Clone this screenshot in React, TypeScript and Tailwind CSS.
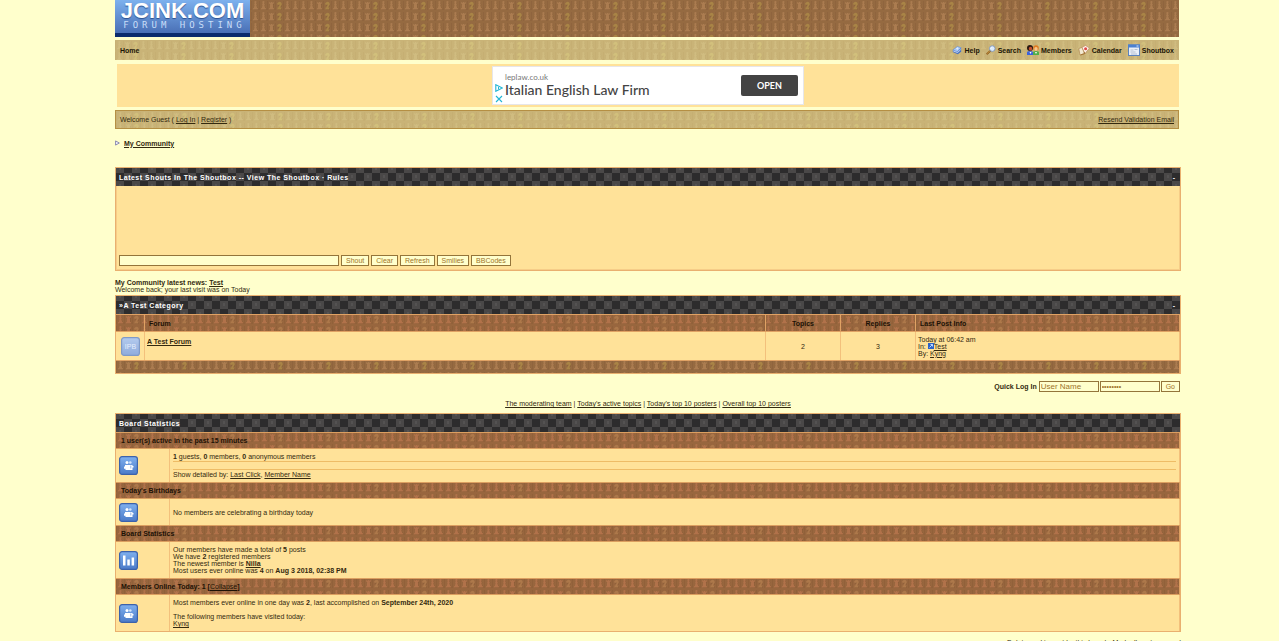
import React from "react";

type Tone = "wood" | "red" | "tan" | "check";

const PIECE = {
  pawn: "M-1-3.2a1.2 1.2 0 1 1 2 0l-.4 1h.8v1h-.6L1.600 2H2.400V3.500H-2.400V2H-1.600L-.8-1.200H-1.400v-1h.8z",
  rook: "M-2.200-4h1.200v1h.5v-1h1v1h.5v-1h1.200v2h-.8l.2 4h.8v1.500h-4.800V2h.8l.2-4h-.8z",
  knight: "M-2.400-2.500Q-.5-5 1.500-3.700Q3.400-2 1.200.5L.8 1.500H1.800V3.500H-2V1.500H-1Q-1 0 .6-1.300L-1-1.200L-1.800-.8z",
};

function ChessPattern({ id, bg, piece, shade, gold }: { id: string; bg: string; piece: string; shade: string; gold: string }) {
  const row: (keyof typeof PIECE)[] = ["pawn", "rook", "knight", "pawn", "pawn", "pawn"];
  return (
    <pattern id={id} width="48" height="11" patternUnits="userSpaceOnUse">
      <rect width="48" height="11" fill={bg} />
      {row.map((name, i) => (
        <g key={i}>
          <path d={PIECE[name]} fill={shade} transform={`translate(${i * 8 + 5} 6.500)`} />
          <path d={PIECE[name]} fill={name === "knight" ? gold : piece} transform={`translate(${i * 8 + 4.500} 6)`} />
          <rect x={i * 8} y="1" width="1" height="9" fill={shade} opacity=".45" />
        </g>
      ))}
    </pattern>
  );
}

function PatternDefs() {
  return (
    <svg className="absolute h-0 w-0" aria-hidden="true">
      <defs>
        <ChessPattern id="tex-wood" bg="#956a41" piece="#ab7c50" shade="#875e39" gold="#a98446" />
        <ChessPattern id="tex-red" bg="#98663e" piece="#b1724a" shade="#8a5b35" gold="#ad784a" />
        <ChessPattern id="tex-tan" bg="#c9b377" piece="#d0bc80" shade="#c3ac70" gold="#d2c07c" />
        <pattern id="tex-check" width="16" height="16" patternUnits="userSpaceOnUse">
          <rect width="16" height="16" fill="#4a4848" />
          <rect x="8" y="-3" width="8" height="8" fill="#2d2c2d" />
          <rect x="0" y="5" width="8" height="8" fill="#2d2c2d" />
          <rect x="8" y="13" width="8" height="8" fill="#2d2c2d" />
          <rect x="11" y="7" width="2" height="3" fill="#545252" />
          <rect x="3" y="0" width="2" height="2" fill="#545252" />
        </pattern>
      </defs>
    </svg>
  );
}

function Texture({ tone }: { tone: Tone }) {
  return (
    <svg className="absolute inset-0 -z-10 h-full w-full" aria-hidden="true">
      <rect width="100%" height="100%" fill={`url(#tex-${tone})`} />
    </svg>
  );
}

function Link({ children, bold }: { children: React.ReactNode; bold?: boolean }) {
  return (
    <a href="#" className={bold ? "font-bold underline" : "underline"}>
      {children}
    </a>
  );
}

function TitleBar({ title, collapsible }: { title: string; collapsible?: boolean }) {
  return (
    <div className="relative isolate flex h-[18px] items-center justify-between px-[3px] text-white">
      <Texture tone="check" />
      <h2 className="font-bold tracking-[0.07em]">{title}</h2>
      {collapsible && (
        <button type="button" aria-label={`Collapse ${title}`} className="px-0.5 font-bold">
          -
        </button>
      )}
    </div>
  );
}

function HelpIcon() {
  return (
    <svg viewBox="0 0 12 12" className="size-2.5" aria-hidden="true">
      <path d="M1 6.500 6.500 2 11 3.500V8L7 11 1 8.500z" fill="#4471c4" />
      <path d="M1 6 6.500 1.700 11 3.300 6.500 8z" fill="#a9c9f5" stroke="#5d89d6" strokeWidth=".6" />
      <path d="M1.500 7.200 6.700 9 10.500 5.500" fill="none" stroke="#fff" strokeWidth=".8" />
      <path d="M5 4.300q1.500-1.300 2.200-.4t-1.400 1.300" fill="none" stroke="#fff" strokeWidth=".9" />
    </svg>
  );
}

function SearchIcon() {
  return (
    <svg viewBox="0 0 12 12" className="size-2.5" aria-hidden="true">
      <path d="M5 7 1.600 10.400" stroke="#8a5a1c" strokeWidth="2.400" strokeLinecap="round" />
      <path d="M4.600 7 1.700 9.900" stroke="#e2ae55" strokeWidth=".9" strokeLinecap="round" />
      <circle cx="7.500" cy="4.300" r="3.400" fill="#dcebfb" stroke="#7f96b8" strokeWidth="1.100" />
      <path d="M5.700 4.200Q6.200 3 7.500 2.900" stroke="#fff" strokeWidth=".9" fill="none" />
    </svg>
  );
}

function MembersIcon() {
  return (
    <svg viewBox="0 0 12 12" className="size-3" aria-hidden="true">
      <path d="M0 11V8.500Q0 7 3 7T6 8.500V11z" fill="#3a62dc" />
      <path d="M6 11V8.500Q6 7 9 7T12 8.500V11z" fill="#4fae4a" />
      <circle cx="3" cy="4" r="3" fill="#2a1812" />
      <ellipse cx="3.500" cy="4.800" rx="1.700" ry="2" fill="#c4532f" />
      <circle cx="9" cy="4" r="2.800" fill="#e07b22" />
      <ellipse cx="9" cy="5" rx="1.700" ry="2" fill="#f7c78b" />
      <path d="M2.500 8 3.500 10 4.500 8zM8 8 9 10 10 8z" fill="#fff" />
    </svg>
  );
}

function CalendarIcon() {
  return (
    <svg viewBox="0 0 12 12" className="size-3" aria-hidden="true">
      <path d="M.8 4.500 4 3.500 6.500 9.500 2 11z" fill="#f3ead2" stroke="#b08a50" strokeWidth=".7" />
      <path d="M4 3.500 7.500 1.500 11.500 4 7 9.500z" fill="#fff6ee" stroke="#bb8b62" strokeWidth=".7" />
      <circle cx="7.600" cy="4.800" r="1.500" fill="#e04a48" />
      <path d="M2.500 11 7 9.500 6 8" fill="none" stroke="#a57436" strokeWidth="1" />
    </svg>
  );
}

function ShoutboxIcon() {
  return (
    <svg viewBox="0 0 12 12" className="size-3" aria-hidden="true">
      <rect x=".5" y="1" width="11" height="10.500" fill="#e9eff8" stroke="#5b83bd" />
      <rect x="0" y=".5" width="12" height="3" fill="#4b80d0" />
      <path d="M8.500 2h2" stroke="#dbe9ff" strokeWidth="1" />
      <path d="M2.500 6h3M6.500 5.500h3M2.500 8h5M3 10h6" stroke="#a7b4c6" strokeWidth=".8" />
    </svg>
  );
}

function Tile({ kind }: { kind: "people" | "bars" | "forum" }) {
  const faded = kind === "forum";
  return (
    <svg viewBox="0 0 19 19" className="h-[19px] w-[19px]" aria-hidden="true">
      <defs>
        <linearGradient id={`tile-${kind}`} x2="0" y2="1">
          <stop offset="0" stopColor={faded ? "#b4cbee" : "#7fb0ee"} />
          <stop offset="1" stopColor={faded ? "#8fabdc" : "#4c7bc8"} />
        </linearGradient>
      </defs>
      <rect x=".6" y=".6" width="17.800" height="17.800" rx="2.500" fill={`url(#tile-${kind})`} stroke={faded ? "#7f9ac8" : "#3c62ab"} strokeWidth="1.200" />
      {kind === "people" && (
        <g fill="#fff">
          <circle cx="8" cy="6.500" r="1.500" />
          <circle cx="11.300" cy="6.500" r="1.300" fill="#d4e4fb" />
          <path d="M6 9h7.500v1h1v1.500h-1V14H6.500V12.800H5V10.500H6z" />
          <path d="M11.800 9.500v3" stroke="#6b98de" strokeWidth=".7" />
        </g>
      )}
      {kind === "bars" && <path d="M4 4.500h2.500v10H4zM8.300 8.500h2.500v6H8.300zM12.600 6.500h2.500v8h-2.500z" fill="#fff" />}
      {faded && (
        <text x="9.500" y="12" textAnchor="middle" fontSize="7" fill="#e6eefc" fontFamily="Liberation Sans, sans-serif">
          IPB
        </text>
      )}
    </svg>
  );
}

const NAV = [
  { label: "Help", Icon: HelpIcon },
  { label: "Search", Icon: SearchIcon },
  { label: "Members", Icon: MembersIcon },
  { label: "Calendar", Icon: CalendarIcon },
  { label: "Shoutbox", Icon: ShoutboxIcon },
];

const FIELD = "h-[11px] border border-[#94753a] bg-[#ffffcc] text-[#a0742a] placeholder:text-[#a0742a] outline-none";

function SmallButton({ children }: { children: string }) {
  return (
    <button type="button" className="flex h-[11px] items-center border border-[#94753a] bg-[#ffffcc] px-1 text-[#a0742a]">
      {children}
    </button>
  );
}

function Header() {
  return (
    <header className="mr-0.5">
      <div className="relative isolate flex h-[37px]">
        <Texture tone="wood" />
        <a
          href="#"
          className="flex w-[135px] flex-col items-center border-b-4 border-[#0b2c6d] bg-linear-to-b from-[#7db1ee] to-[#4a70b6] text-white"
        >
          <span className="text-[22px] leading-[21px] font-bold [text-shadow:0_1px_1px_#2d508f]">JCINK.COM</span>
          <span className="pl-1 font-['DejaVu_Sans_Mono',monospace] text-[9px] leading-[9px] tracking-[4px] text-[#c9def8]">FORUM HOSTING</span>
        </a>
      </div>
      <nav className="relative isolate mt-[3px] flex h-5 items-center justify-between px-[5px] font-bold text-[#1d1706]">
        <Texture tone="tan" />
        <a href="#">Home</a>
        <ul className="flex items-center gap-1.5">
          {NAV.map(({ label, Icon }) => (
            <li key={label}>
              <a href="#" className="flex items-center gap-0.5">
                <Icon />
                {label}
              </a>
            </li>
          ))}
        </ul>
      </nav>
      <div className="mt-1 ml-0.5 flex h-[43px] items-center justify-center bg-[#ffe299]">
        <aside aria-label="Advertisement" className="flex h-[39px] w-[312px] items-center border border-[#e6e6ea] bg-white pr-[5px] font-[Lato,sans-serif]">
          <div className="flex w-3 flex-col items-center gap-[3px] self-end pb-px">
            <svg viewBox="0 0 8 8" className="h-2 w-2" aria-hidden="true">
              <path d="M.8.7 7.400 4 .8 7.300z" fill="none" stroke="#22b5d4" strokeWidth="1.100" />
              <path d="M3.500 3v2.200" stroke="#22b5d4" />
            </svg>
            <svg viewBox="0 0 8 8" className="h-2 w-2" aria-hidden="true">
              <path d="M1 1l6 6M7 1 1 7" stroke="#22b5d4" strokeWidth="1.100" />
            </svg>
          </div>
          <div className="grow pb-0.5">
            <p className="text-[8px] leading-[10px] text-[#777]">leplaw.co.uk</p>
            <p className="text-[14px] leading-4 font-medium text-[#444]">Italian English Law Firm</p>
          </div>
          <a href="#" className="flex h-[21px] w-[57px] items-center justify-center rounded-[2px] bg-[#434343] text-[9px] font-bold text-white">
            OPEN
          </a>
        </aside>
      </div>
      <div className="relative isolate mt-[3px] flex h-[19px] items-center justify-between border border-[#b58f43] px-1">
        <Texture tone="tan" />
        <p>
          Welcome Guest ( <Link>Log In</Link> | <Link>Register</Link> )
        </p>
        <Link>Resend Validation Email</Link>
      </div>
    </header>
  );
}

function Shoutbox() {
  return (
    <section className="mt-5 border border-[#e9b06f]">
      <TitleBar title="Latest Shouts In The Shoutbox -- View The Shoutbox · Rules" collapsible />
      <div className="flex h-[84px] items-end border-x border-b border-[#f6cd88] bg-[#ffe299] px-0.5 pb-[3px]">
        <form className="flex gap-0.5" onSubmit={(e) => e.preventDefault()}>
          <input aria-label="Shout message" className={`${FIELD} w-[220px] px-1`} />
          {["Shout", "Clear", "Refresh", "Smilies", "BBCodes"].map((b) => (
            <SmallButton key={b}>{b}</SmallButton>
          ))}
        </form>
      </div>
    </section>
  );
}

function Category() {
  return (
    <section className="mt-[2px] border border-[#e9b06f]">
      <TitleBar title="»A Test Category" collapsible />
      <table className="w-full table-fixed border-separate border-spacing-0">
        <colgroup>
          <col className="w-[29px]" />
          <col />
          <col className="w-[75px]" />
          <col className="w-[75px]" />
          <col className="w-[264px]" />
        </colgroup>
        <thead>
          <tr className="relative isolate h-[18px] text-[#1d1206] *:border-y *:border-r *:border-[#e0a264] *:px-1">
            <th>
              <Texture tone="red" />
            </th>
            <th className="text-left">Forum</th>
            <th>Topics</th>
            <th>Replies</th>
            <th className="text-left">Last Post Info</th>
          </tr>
        </thead>
        <tbody>
          <tr className="h-7 bg-[#ffe299] *:border-r *:border-[#f3c07c]">
            <td className="pl-[5px]">
              <Tile kind="forum" />
            </td>
            <td className="px-0.5 pt-[6px] align-top">
              <Link bold>A Test Forum</Link>
            </td>
            <td className="text-center">2</td>
            <td className="text-center">3</td>
            <td className="px-0.5">
              Today at 06:42 am
              <br />
              In:{" "}
              <svg viewBox="0 0 6 6" className="inline h-[6px] w-[6px] align-baseline" aria-hidden="true">
                <rect width="6" height="6" fill="#2c63c8" />
                <path d="M1.500 4.500 4.500 1.500M2.500 1.500h2v2" stroke="#bcd8ff" fill="none" />
              </svg>
              <Link>Test</Link>
              <br />
              By: <Link>Kyng</Link>
            </td>
          </tr>
        </tbody>
        <tfoot>
          <tr className="relative isolate h-[13px]">
            <td colSpan={5} className="border-t border-r border-[#e0a264]">
              <Texture tone="wood" />
            </td>
          </tr>
        </tfoot>
      </table>
    </section>
  );
}

function StatBlock({ title, kind, height, children }: { title: React.ReactNode; kind: "people" | "bars"; height: string; children: React.ReactNode }) {
  return (
    <tbody>
      <tr className="relative isolate h-[17px]">
        <th colSpan={2} className="border-y border-r border-[#dc9f60] px-[5px] text-left text-[#1d1206]">
          <Texture tone="red" />
          {title}
        </th>
      </tr>
      <tr className={`${height} bg-[#ffe299] *:border-r *:border-[#f3c07c]`}>
        <td className="pl-[3px]">
          <Tile kind={kind} />
        </td>
        <td className="px-[3px]">{children}</td>
      </tr>
    </tbody>
  );
}

function Statistics() {
  return (
    <section className="mt-1.5 border border-[#e9b06f]">
      <TitleBar title="Board Statistics" />
      <table className="w-full table-fixed border-separate border-spacing-0">
        <colgroup>
          <col className="w-[54px]" />
          <col />
        </colgroup>
        <StatBlock title="1 user(s) active in the past 15 minutes" kind="people" height="h-[33px]">
          <b>1</b> guests, <b>0</b> members, <b>0</b> anonymous members
          <div className="my-px h-[9px] border-y border-[#eebc66]" />
          Show detailed by: <Link>Last Click</Link>, <Link>Member Name</Link>
        </StatBlock>
        <StatBlock title="Today's Birthdays" kind="people" height="h-[26px]">
          No members are celebrating a birthday today
        </StatBlock>
        <StatBlock title="Board Statistics" kind="bars" height="h-[36px]">
          Our members have made a total of <b>5</b> posts
          <br />
          We have <b>2</b> registered members
          <br />
          The newest member is <Link bold>Nilla</Link>
          <br />
          Most users ever online was <b>4</b> on <b>Aug 3 2018, 02:38 PM</b>
        </StatBlock>
        <StatBlock
          title={
            <>
              Members Online Today: 1 [<a href="#" className="font-normal underline">Collapse</a>]
            </>
          }
          kind="people"
          height="h-[36px]"
        >
          Most members ever online in one day was <b>2</b>, last accomplished on <b>September 24th, 2020</b>
          <br />
          <br />
          The following members have visited today:
          <br />
          <Link>Kyng</Link>
        </StatBlock>
      </table>
    </section>
  );
}

export default function App() {
  return (
    <div className="min-h-screen bg-[#ffffcc] pr-[98px] pl-[115px] font-['Liberation_Sans',Arial,sans-serif] text-[7px] leading-[7px] text-[#33290f]">
      <PatternDefs />
      <Header />
      <p className="mt-2.5 flex items-center gap-1">
        <svg viewBox="0 0 6 8" className="h-2 w-[5px]" aria-hidden="true">
          <path d="M.7 1.500 5.200 4 .7 6.500z" fill="#f4f4ff" stroke="#6a6aa0" strokeWidth=".9" />
        </svg>
        <Link bold>My Community</Link>
      </p>
      <Shoutbox />
      <div className="mt-2">
        <p className="font-bold">
          My Community latest news: <Link>Test</Link>
        </p>
        <p>Welcome back; your last visit was on Today</p>
      </div>
      <Category />
      <form className="mt-[7px] mr-px flex items-center justify-end gap-px" onSubmit={(e) => e.preventDefault()}>
        <label htmlFor="user" className="mr-px font-bold">
          Quick Log In
        </label>
        <input id="user" placeholder="User Name" className={`${FIELD} w-[60px] px-px text-[8px]`} />
        <input type="password" aria-label="Password" defaultValue="password" className={`${FIELD} w-[60px] px-px`} />
        <SmallButton>Go</SmallButton>
      </form>
      <p className="mt-2 text-center">
        <Link>The moderating team</Link> | <Link>Today's active topics</Link> | <Link>Today's top 10 posters</Link> |{" "}
        <Link>Overall top 10 posters</Link>
      </p>
      <Statistics />
      <footer className="mt-[7px] text-right">
        <a href="#">Delete cookies set by this board</a> · <a href="#">Mark all posts as read</a>
      </footer>
    </div>
  );
}
